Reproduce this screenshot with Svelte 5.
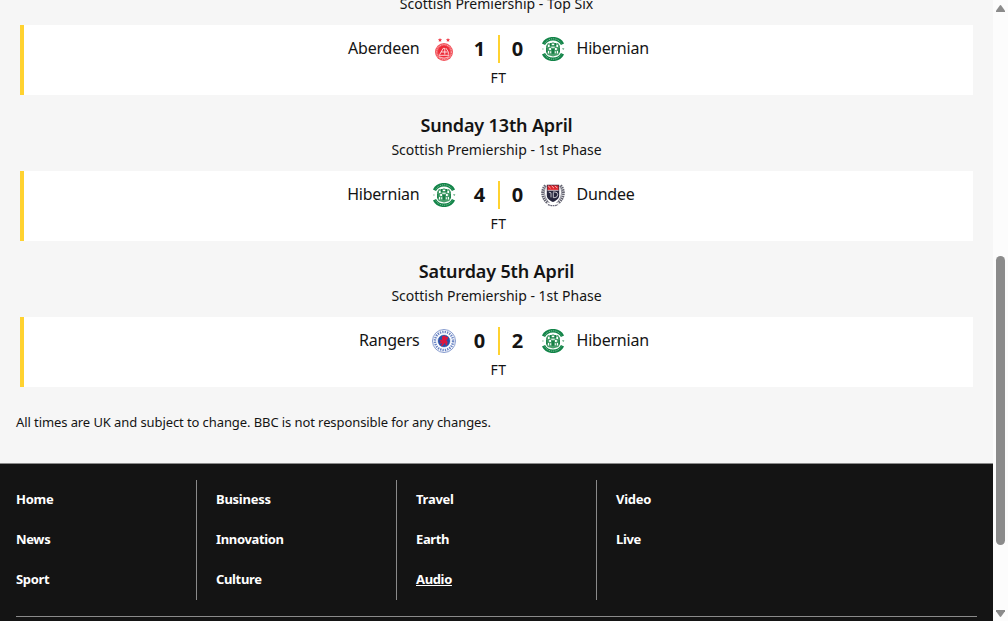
<script>
  const fixtures = [
    { date: '', stage: 'Scottish Premiership - Top Six', home: 'Aberdeen', hs: 1, as: 0, away: 'Hibernian' },
    { date: 'Sunday 13th April', stage: 'Scottish Premiership - 1st Phase', home: 'Hibernian', hs: 4, as: 0, away: 'Dundee' },
    { date: 'Saturday 5th April', stage: 'Scottish Premiership - 1st Phase', home: 'Rangers', hs: 0, as: 2, away: 'Hibernian' }
  ];
  const columns = [
    ['Home', 'News', 'Sport'],
    ['Business', 'Innovation', 'Culture'],
    ['Travel', 'Earth', 'Audio'],
    ['Video', 'Live']
  ];
</script>

{#snippet badge(team)}
  <svg class="badge" viewBox="0 0 24 24" aria-hidden="true">
    {#if team === 'Aberdeen'}
      <path fill="#ee3340" d="M8 .9l.6 1.4 1.5.1-1.2 1 .4 1.5L8 4.1l-1.3.8.4-1.5-1.2-1 1.5-.1zM16 .9l.6 1.4 1.5.1-1.2 1 .4 1.5-1.3-.8-1.3.8.4-1.5-1.2-1 1.5-.1z" />
      <circle cx="12" cy="15" r="9" fill="#f2545c" />
      <circle cx="12" cy="15" r="7.4" fill="none" stroke="#f9a3a8" stroke-width="1.1" stroke-dasharray="1 .8" />
      <circle cx="12" cy="14.5" r="5.9" fill="#ee2a36" />
      <path fill="none" stroke="#fff" stroke-width=".8" d="M7.6 17.6l3.6-6.2h1.6v6.2M9.2 15h6.3M14 11.2l2.3 3.8v2.6M6.9 18.3h10.2" />
      <path fill="none" stroke="#fbc3c6" stroke-width=".9" d="M7 20q5 2.4 10 0" />
    {:else if team === 'Hibernian'}
      <path fill="none" stroke="#128448" stroke-width="3.5" d="M2.5 7.2C6.4-.2 17.6-.2 21.5 7.2M2.5 16.8c3.9 7.4 15.1 7.4 19 0" />
      <path fill="none" stroke="#85c09e" stroke-width="1" stroke-dasharray="1 .9" d="M3.8 6.3c3.6-6 12.8-6 16.4 0M3.8 17.7c3.6 6 12.8 6 16.4 0" />
      <path fill="#4a9f6d" d="M5 9l2-3 2 .4 3-1.2 3 1.2 2-.4 2 3v6.2L17.3 18 12 19.4 6.7 18 5 15.2z" />
      <path fill="#177f46" d="M9 6h1.5v3H9zM13.5 6H15v3h-1.5zM10.7 12h2.6v4.7h-2.6zM5.2 11h1.2v4H5.2zM17.6 11h1.2v4h-1.2z" />
      <path fill="#fff" d="M7 7.7h1.6v2.4H7zM15.4 7.7H17v2.4h-1.6zM10.8 6.8h2.4v1.1h-2.4zM8.2 11h1.8v2H8.2zM14 11h1.8v2H14zM7 14h1.1v2.5H7zM15.9 14H17v2.5h-1.1zM9.2 14.2h1v2h-1zM13.8 14.2h1v2h-1zM10.3 9.7h3.4v1h-3.4z" />
      <path fill="none" stroke="#6baf87" stroke-width=".9" d="M1.2 12h1.4M21.3 11.5h1.5l-.8 1.5" />
    {:else if team === 'Dundee'}
      <path fill="none" stroke="#62626f" stroke-width="2.9" stroke-dasharray="1.5 .7" d="M4.4 2.4C.2 7.3.6 15.2 7 20.2M19.6 2.4c4.2 4.9 3.8 12.8-2.6 17.8" />
      <path fill="none" stroke="#777784" stroke-width=".8" d="M4.9 3C2.3 8.5 3.2 15 8.5 20M19.1 3c2.6 5.5 1.7 12-3.6 17" />
      <path fill="#25263d" d="M5.8 1.8h12.4v10.7c0 3-2.7 5-6.2 6.6-3.5-1.6-6.2-3.6-6.2-6.6z" />
      <path fill="#de252c" d="M6.5 2.4h11v4.8h-11z" />
      <path fill="none" stroke="#fff" stroke-width=".7" d="M7.2 2.8l2.4 2.4M10.6 2.8L13 5.2M14 2.8l2.4 2.4M6.5 7.3h11M7.8 9.2l2.2.6v4.6M12 9h2q2.7 0 2.7 2.7T14 14.6h-1.7V9.5" />
      <path fill="none" stroke="#686879" stroke-width="1.3" stroke-dasharray="1.8 .6" d="M7 21.7q5 2 10 0" />
    {:else}
      <circle cx="12" cy="12" r="11.5" fill="#fff" stroke="#7890c8" stroke-width=".9" />
      <circle cx="12" cy="12" r="9.1" fill="none" stroke="#6984c4" stroke-width="2.5" stroke-dasharray="1.4 1" />
      <circle cx="12" cy="12" r="6.5" fill="#2453ab" stroke="#fff" stroke-width=".7" />
      <path fill="#dc173e" d="M10.3 7.2l2.6-.6 1.3 1.5 2-.5-.6 2.7-1.3.8 1.3 1.9-.8 3.4-1.4-.4.2-1.7-1.4.3-1.9 2.6-1.5-.5 1.4-2-.9-.6-1 1-.9-1.1 1.7-1.3-1.4-.7.1-1.4 2 .7z" />
    {/if}
  </svg>
{/snippet}

<div class="window">
  <div class="page">
    <main>
      {#each fixtures as f}
        <section>
          <header>
            <h2>{f.date}</h2>
            <h3>{f.stage}</h3>
          </header>
          <article>
            <div class="match">
              <div class="side home">
                <span class="team">{f.home}</span>
                {@render badge(f.home)}
                <b>{f.hs}</b>
              </div>
              <i class="split"></i>
              <div class="side">
                <b>{f.as}</b>
                {@render badge(f.away)}
                <span class="team">{f.away}</span>
              </div>
            </div>
            <div class="status">FT</div>
          </article>
        </section>
      {/each}
      <p>All times are UK and subject to change. BBC is not responsible for any changes.</p>
    </main>
    <footer>
      <nav>
        {#each columns as col}
          <ul>
            {#each col as link}
              <li><span class:active={link === 'Audio'}>{link}</span></li>
            {/each}
          </ul>
        {/each}
      </nav>
    </footer>
  </div>
  <aside>
    <svg width="9" height="7" viewBox="0 0 9 7"><path fill="#8b8b8b" d="M0 7V5.8L3.6.7q.9-1.2 1.8 0L9 5.8V7z" /></svg>
    <div class="thumb"></div>
    <svg width="9" height="7" viewBox="0 0 9 7"><path fill="#8b8b8b" d="M0 0v1.2l3.6 5.1q.9 1.2 1.8 0L9 1.2V0z" /></svg>
  </aside>
</div>

<style>
  :global(body) { margin: 0; overflow: hidden; }
  .window { display: flex; width: 1008px; height: 621px; overflow: hidden; background: #fcfcfc; font-family: "Noto Sans", sans-serif; color: #141414; }
  .page { width: 993px; height: 621px; overflow: hidden; background: #f6f6f6; display: flex; flex-direction: column; }
  main { height: 463px; flex: none; display: flex; flex-direction: column; }
  section { margin: 0 20px; flex: none; }
  header { height: 76px; box-sizing: border-box; padding-top: 17px; text-align: center; }
  section:first-child header { margin-top: -51px; }
  h2 { margin: 0 0 1px; height: 26px; line-height: 26px; font-size: 18px; font-weight: 600; letter-spacing: -.15px; }
  h3 { margin: 0; height: 22px; line-height: 22px; font-size: 14px; font-weight: 400; }
  article { height: 70px; box-sizing: border-box; padding-top: 10px; border-left: 4px solid #ffd230; background: #fff; }
  .match { display: flex; height: 28px; }
  .side { flex: 1; display: flex; align-items: center; }
  .home { justify-content: flex-end; }
  .team { font-size: 16px; line-height: 28px; margin: 0 12px; padding-bottom: 2px; letter-spacing: -.22px; }
  .badge { width: 24px; height: 24px; flex: none; }
  b { width: 12px; text-align: center; font-size: 20px; line-height: 28px; font-weight: 700; }
  .home b { margin: 0 12px 0 18px; }
  .side:last-child b { margin: 0 17px 0 12px; }
  .split { width: 2px; background: #ffd230; }
  .status { height: 30px; line-height: 30px; font-size: 14px; text-align: center; letter-spacing: .4px; }
  p { margin: 25px 16px 0; font-size: 13px; line-height: 20px; white-space: nowrap; letter-spacing: -.09px; }
  footer { flex: 1; border-top: 1px solid #8a8a8a; background: #141414; color: #fff; padding: 16px 16px 0; }
  nav { display: flex; height: 136px; border-bottom: 1px solid #8a8a8a; }
  ul { list-style: none; margin: 0 0 0 19px; padding: 0; width: 180px; height: 120px; border-right: 1px solid #8a8a8a; }
  ul:first-child { margin-left: 0; }
  ul:last-child { border: 0; }
  li { height: 40px; line-height: 38px; font-size: 13px; font-weight: 700; letter-spacing: -.35px; }
  li:first-child { letter-spacing: -.25px; }
  .active { text-decoration: underline; }
  aside { width: 15px; height: 621px; box-sizing: border-box; padding: 5px 0 4px 3px; display: flex; flex-direction: column; }
  aside svg { display: block; }
  .thumb { width: 9px; height: 289px; margin: 244px 0 65px; border-radius: 5px; background: #8b8b8b; }
</style>
